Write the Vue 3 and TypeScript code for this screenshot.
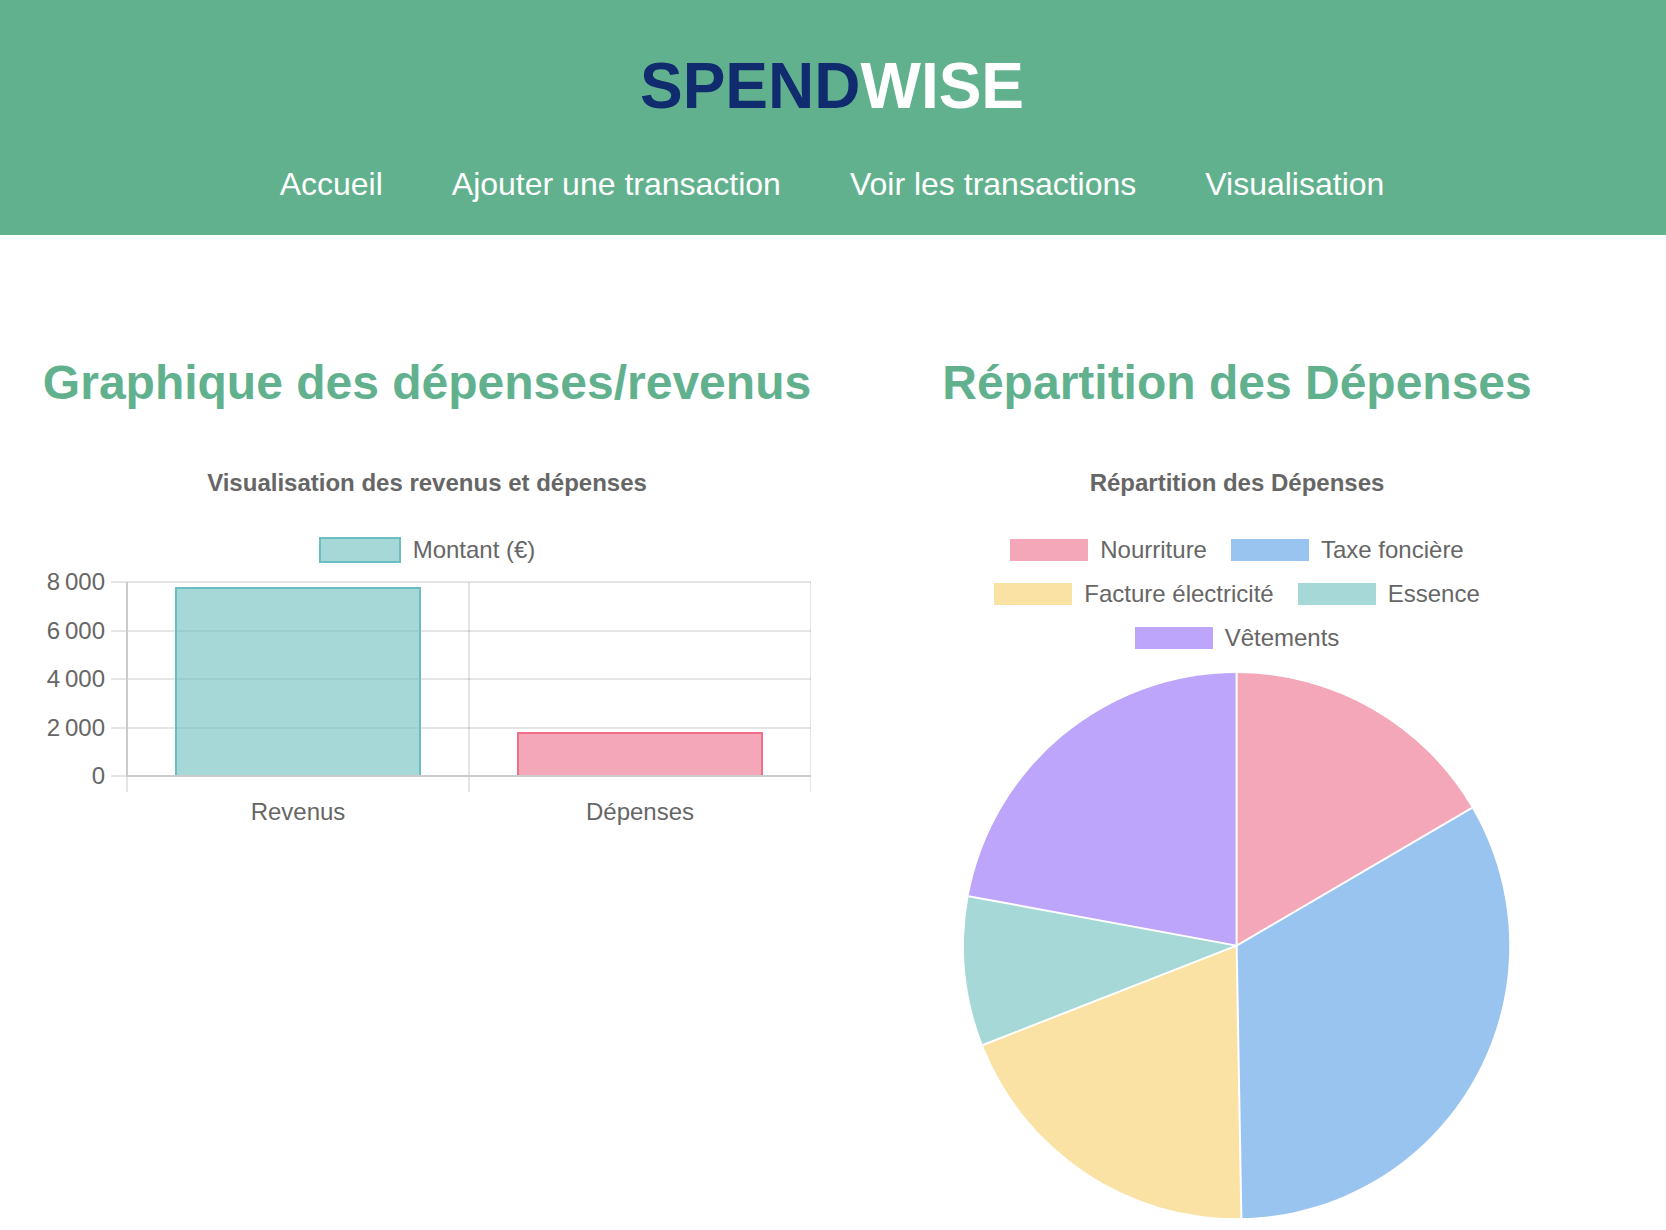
<script setup lang="ts">
interface Slice {
  label: string
  value: number
  color: string
}

interface Bar {
  label: string
  value: number
  fill: string
  stroke: string
}

const links: string[] = ['Accueil', 'Ajouter une transaction', 'Voir les transactions', 'Visualisation']

const expenses: Slice[] = [
  { label: 'Nourriture', value: 300, color: '#f4a7b8' },
  { label: 'Taxe foncière', value: 600, color: '#9ac4f0' },
  { label: 'Facture électricité', value: 350, color: '#fae2a4' },
  { label: 'Essence', value: 160, color: '#a6d8d7' },
  { label: 'Vêtements', value: 400, color: '#bda5fb' },
]

const total = expenses.reduce((sum, e) => sum + e.value, 0)

const bars: Bar[] = [
  { label: 'Revenus', value: 7800, fill: 'rgba(105, 190, 189, 0.6)', stroke: '#6abdc0' },
  { label: 'Dépenses', value: total, fill: '#f4a7b8', stroke: '#ed6f88' },
]

// Bar chart geometry, in viewBox units
const axisX = 84
const right = 768
const top = 17
const base = 211
const maxValue = 8000
const step = (right - axisX) / bars.length
const barWidth = Math.round(step * 0.72)

const yOf = (v: number): number => Math.round(base - (v / maxValue) * (base - top))
const formatTick = (v: number): string =>
  v >= 1000 ? `${Math.floor(v / 1000)}\u2009${String(v % 1000).padStart(3, '0')}` : String(v)

const ticks = [8000, 6000, 4000, 2000, 0].map((v) => ({ text: formatTick(v), y: yOf(v) }))
const columns = bars.map((b, i) => {
  const center = axisX + step * (i + 0.5)
  const x = Math.round(center - barWidth / 2)
  const y = yOf(b.value)
  return {
    ...b,
    center,
    x,
    y,
    height: base - y,
    outline: `M${x + 1} ${base}V${y + 1}H${x + barWidth - 1}V${base}`,
  }
})
const gridX = bars.map((_, i) => axisX + step * (i + 1))

// Pie geometry
const size = 546
const r = size / 2
const point = (v: number): string => {
  const a = (v / total) * Math.PI * 2
  return `${r + r * Math.sin(a)} ${r - r * Math.cos(a)}`
}
let acc = 0
const slices = expenses.map((e) => {
  const start = acc
  acc += e.value
  const large = e.value / total > 0.5 ? 1 : 0
  return {
    ...e,
    d: `M${r} ${r}L${point(start)}A${r} ${r} 0 ${large} 1 ${point(acc)}Z`,
    edge: `M${r} ${r}L${point(start)}`,
  }
})
</script>

<template>
  <header class="header">
    <h1 class="brand"><span class="brand-dark">SPEND</span>WISE</h1>
    <nav class="nav">
      <a v-for="link in links" :key="link" href="#">{{ link }}</a>
    </nav>
  </header>

  <main class="charts">
    <section class="chart">
      <h2>Graphique des dépenses/revenus</h2>
      <p class="chart-title">Visualisation des revenus et dépenses</p>
      <ul class="legend">
        <li><span class="swatch outlined"></span>Montant (€)</li>
      </ul>
      <svg class="bar-chart" viewBox="0 0 768 266" role="img" aria-label="Visualisation des revenus et dépenses">
        <g class="grid">
          <line v-for="t in ticks" :key="t.y" x1="68" :x2="right" :y1="t.y" :y2="t.y" />
          <line v-for="x in gridX" :key="x" :x1="x" :x2="x" :y1="top" y2="227" />
          <line :x1="axisX" :x2="axisX" :y1="base" y2="227" />
        </g>
        <g v-for="c in columns" :key="c.label">
          <rect :x="c.x" :y="c.y" :width="barWidth" :height="c.height" :fill="c.fill" />
          <path :d="c.outline" fill="none" :stroke="c.stroke" stroke-width="2" />
          <text :x="c.center" y="255" text-anchor="middle">{{ c.label }}</text>
        </g>
        <path class="axis" :d="`M${axisX} ${top}V${base}H${right}`" />
        <text v-for="t in ticks" :key="t.text" x="62" :y="t.y + 8" text-anchor="end">{{ t.text }}</text>
      </svg>
    </section>

    <section class="chart">
      <h2>Répartition des Dépenses</h2>
      <p class="chart-title">Répartition des Dépenses</p>
      <ul class="legend">
        <li v-for="e in expenses" :key="e.label">
          <span class="swatch" :style="{ background: e.color }"></span>{{ e.label }}
        </li>
      </ul>
      <svg class="pie" :viewBox="`0 0 ${size} ${size}`" role="img" aria-label="Répartition des Dépenses">
        <path v-for="s in slices" :key="s.label" :d="s.d" :fill="s.color" />
        <path v-for="s in slices" :key="s.label" :d="s.edge" stroke="#fff" stroke-width="2" />
      </svg>
    </section>
  </main>
</template>

<style>
body {
  margin: 0;
  background: #fff;
  font-family: "Liberation Sans", Arial, sans-serif;
}
</style>

<style scoped>
.header {
  display: flex;
  flex-direction: column;
  align-items: center;
  gap: 44px;
  padding: 50px 2px 33px 0;
  background: #62b18e;
  color: #fff;
}

.brand {
  margin: 0;
  font-size: 64px;
  line-height: 72px;
}

.brand-dark {
  color: #102c6e;
}

.nav {
  display: flex;
  flex-wrap: wrap;
  justify-content: center;
  gap: 16px 69px;
  font-size: 32px;
  line-height: 36px;
}

.nav a {
  color: #fff;
  text-decoration: none;
}

.charts {
  display: grid;
  grid-template-columns: 1fr 1fr;
  gap: 42px;
  padding: 120px 45px 0 43px;
}

.chart {
  display: flex;
  flex-direction: column;
  align-items: center;
  min-width: 0;
  color: #666;
  font-size: 24px;
  line-height: 30px;
}

h2 {
  margin: 0 0 57px;
  color: #62b18e;
  font-size: 48px;
  line-height: 56px;
  white-space: nowrap;
}

.chart-title {
  margin: 0 0 37px;
  font-weight: bold;
}

.legend {
  display: flex;
  flex-wrap: wrap;
  justify-content: center;
  gap: 14px 24px;
  max-width: 540px;
  margin: 0;
  padding: 0;
  list-style: none;
}

.legend li {
  display: flex;
  align-items: center;
  gap: 12px;
}

.swatch {
  width: 78px;
  height: 22px;
}

.swatch.outlined {
  border: 2px solid #6abdc0;
  background: #a6d8d7;
}

.bar-chart {
  display: block;
  width: 100%;
}

.bar-chart text {
  fill: #666;
  font-size: 24px;
}

.grid line {
  stroke: rgba(0, 0, 0, 0.1);
  stroke-width: 2;
}

.axis {
  fill: none;
  stroke: #cbcbcb;
  stroke-width: 2;
}

.pie {
  display: block;
  width: 71%;
  margin-top: 20px;
}
</style>
